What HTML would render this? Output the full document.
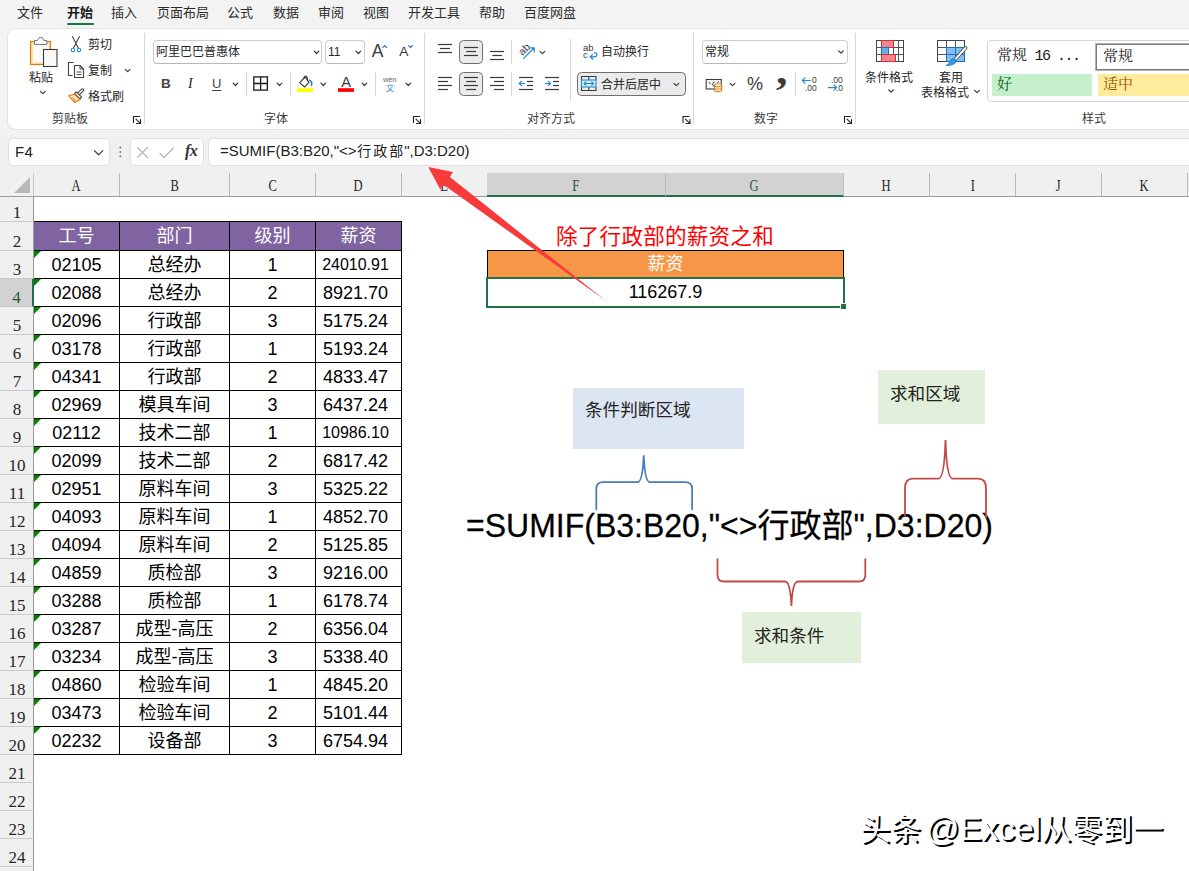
<!DOCTYPE html>
<html lang="zh-CN">
<head>
<meta charset="utf-8">
<title>Excel SUMIF</title>
<style>
*{box-sizing:border-box}
html,body{margin:0;padding:0}
body{width:1189px;height:871px;overflow:hidden;position:relative;background:#f3f3f3;
 font-family:"Liberation Sans","Noto Sans CJK SC",sans-serif;color:#242424}
.abs{position:absolute}
/* ---------- tabs ---------- */
#tabs{position:absolute;left:0;top:0;width:1189px;height:28px}
#tabs span{position:absolute;top:3px;height:20px;line-height:20px;font-size:13px;white-space:nowrap;color:#2b2b2b}
#tabs span.on{font-weight:bold;color:#1a1a1a}
#tabs u{position:absolute;left:67px;top:22.5px;width:27px;height:2.4px;background:#107c41;border-radius:1px}
/* ---------- ribbon ---------- */
#ribbon .t{position:absolute;font-size:12px;line-height:16px;height:16px;white-space:nowrap;color:#262626}
#ribbon .lbl{position:absolute;top:82px;font-size:12px;line-height:16px;height:16px;white-space:nowrap;color:#3b3b3b;transform:translateX(-50%)}
#ribbon .vs{position:absolute;width:1px;background:#d6d6d6}
#ribbon .box{position:absolute;height:24px;border:1px solid #cdcdcd;border-bottom-color:#b8b8b8;border-radius:4px;background:#fff;font-size:12px;line-height:22px;padding-left:2px;color:#262626;white-space:nowrap}
#ribbon .btn{position:absolute;border:1px solid #6e6e6e;border-radius:4.5px;background:#ebebeb}
#ribbon svg{position:absolute;overflow:visible}
.chev{position:absolute;width:7px;height:4px}
/* ---------- formula bar ---------- */
#fbar{position:absolute;left:0;top:130px;width:1189px;height:43px;overflow:hidden;background:linear-gradient(#f3f3f3,#f0f0f0 30%)}
#fbar .fb{position:absolute;top:8px;height:28px;background:#fff;border:1px solid #e0e0e0;border-radius:5px}
#fbar svg{position:absolute;overflow:visible}
/* ---------- grid ---------- */
#grid{position:absolute;left:0;top:173px;width:1189px;height:698px;background:#fff}
#colhdr{position:absolute;left:0;top:0;width:1189px;height:24px;background:#f0f0f0;border-bottom:1px solid #9b9b9b}
#colhdr .corner{position:absolute;left:0;top:0;width:34px;height:23px;border-right:1px solid #c8c8c8}
#colhdr .corner i{position:absolute;right:3px;bottom:3px;width:0;height:0;border-left:16px solid transparent;border-bottom:16px solid #b8b8b8}
.ch{position:absolute;top:0;height:23px;line-height:25px;text-align:center;font-family:"Liberation Serif","Noto Serif CJK SC",serif;font-size:17px;color:#262626;border-right:1px solid #b9b9b9}
.ch.sel{background:#d2d2d2;color:#1e5c38;height:24px;border-bottom:2px solid #217346;border-right-color:#bdbdbd;z-index:1}
#rowhdr{position:absolute;left:0;top:-173px;width:34px;height:871px;z-index:2}
.rh{position:absolute;left:0;width:34px;background:#f0f0f0;border-right:1px solid #9b9b9b;border-bottom:1px solid #c8c8c8;font-family:"Liberation Serif","Noto Serif CJK SC",serif;font-size:17px;color:#262626;text-align:center}
.rh span{position:absolute;left:0;right:-1px;bottom:-4px;line-height:24px}
.rh.sel{background:#d2d2d2;color:#1e5c38;border-right:2px solid #217346}
#tbl{position:absolute;left:33px;top:48px;border-collapse:collapse;table-layout:fixed;width:369px}
#tbl td,#tbl th{border:1px solid #000;height:28px;padding:0;text-align:center;font-size:18px;line-height:26px;font-weight:normal;color:#000;position:relative;white-space:nowrap;overflow:hidden}
#tbl tr.hd th{background:#8064a2;color:#fff;height:29px}
#tbl td.sm{font-size:16px}
#tbl td:nth-child(4){padding-right:6px}
#tbl td.id i{position:absolute;left:0;top:0;width:0;height:0;border-top:7px solid #008000;border-right:7px solid transparent}
/* ---------- sheet objects ---------- */
.redtitle{position:absolute;left:487px;top:50px;width:356px;height:28px;line-height:28px;text-align:center;color:#ff0000;font-size:21.6px;letter-spacing:.2px;white-space:nowrap}
.orange{position:absolute;left:487px;top:77px;width:357px;height:28px;background:#f79646;border:1px solid #000;color:#fff;font-size:18px;line-height:27px;text-align:center}
.selcell{position:absolute;left:486px;top:104px;width:359px;height:31px;border:2px solid #217346;background:#fff;font-size:18px;line-height:27px;text-align:center;color:#000}
.selcell b{position:absolute;right:-3px;bottom:-3px;width:5px;height:5px;background:#217346;border:1px solid #fff;border-right:0;border-bottom:0;box-sizing:content-box}
.note{position:absolute}
.note.blue{background:#dce6f2}
.note.green{background:#e2efda}
.note span{position:absolute;font-size:17.6px;line-height:24px;color:#222;white-space:nowrap}
.bigf{position:absolute;left:466px;top:333px;font-size:32px;line-height:40px;color:#000;white-space:nowrap;transform:scaleY(1.045);transform-origin:0 31px;-webkit-text-stroke:.25px #000}
svg.ov{position:absolute;left:0;top:0;pointer-events:none;overflow:visible;z-index:3}
.wm{position:absolute;left:860px;top:636px;word-spacing:-4px;font-size:30.5px;line-height:40px;color:#fff;text-shadow:2px 2px 0 #000;white-space:nowrap}
.wm span{font-size:33.4px}
/* ribbon container uses page coordinates */
#ribbon{position:absolute;left:0;top:0;width:1189px;height:130px;overflow:hidden}
#ribbon .panel{position:absolute;left:8px;top:29px;width:1200px;height:100px;background:#fff;border-radius:8px;box-shadow:0 0 0 1px #e3e3e3,0 1px 2px rgba(0,0,0,.12)}
#ribbon .lbl{top:110px}
#ribbon .gal{position:absolute;left:987px;top:40px;width:230px;height:62px;border:1px solid #d6d6d6;border-radius:4px;background:#fff}
#ribbon .gal div{position:absolute;font-family:"Liberation Mono","Noto Serif CJK SC",monospace;font-size:15px;line-height:22px;white-space:nowrap;color:#1a1a1a}
#ribbon .g1{left:9px;top:5px;letter-spacing:-1.5px}
#ribbon .g2{left:107px;top:2px;width:130px;height:28px;border:2px solid #b5b5b5;outline:1px solid #7a7a7a;outline-offset:-2px;padding-left:6px;line-height:26px !important;background:#fff}
#ribbon .g3{left:4px;top:33px;width:100px;height:22px;background:#c6efce;color:#006100 !important;padding-left:5px;line-height:24px !important}
#ribbon .g4{left:110px;top:33px;width:130px;height:22px;background:#ffeb9c;color:#9c5700 !important;padding-left:5px;line-height:24px !important}
#fbar .nm{position:absolute;left:15px;top:13px;font-size:15px;letter-spacing:.4px;line-height:18px;color:#222}
#fbar .ftxt span{font-size:14px;letter-spacing:2px;margin-left:.5px;margin-right:-1px}
#fbar .ftxt{position:absolute;left:220px;top:11px;font-size:15px;line-height:20px;color:#222;white-space:nowrap}
#fbar .fx{position:absolute;left:185px;top:11px;font-family:"Liberation Serif",serif;font-style:italic;font-weight:bold;font-size:16px;line-height:20px;color:#333;letter-spacing:-.5px}
#ribbon .t.dg{font-size:8.5px;line-height:10px;height:10px;color:#3a3a3a;margin-top:0}
#ribbon .t.ab{font-size:9.5px;line-height:10px;height:10px;color:#3a3a3a;margin-top:0}
#ribbon .t,#ribbon .lbl{margin-top:1px}
#ribbon .g1 span{letter-spacing:0}
.ch span{display:inline-block;transform:scaleX(.74)}
#ribbon .t.cm{font-family:'Liberation Serif',serif;font-weight:bold;font-size:41px;line-height:20px;height:20px;color:#3a3a3a;margin-top:0;transform:scaleX(1.12);transform-origin:0 0}

</style>
</head>
<body>
<div id="tabs">
<span style="left:17px">文件</span><span class="on" style="left:67px">开始</span><span style="left:111px">插入</span><span style="left:157px">页面布局</span><span style="left:227px">公式</span><span style="left:273px">数据</span><span style="left:318px">审阅</span><span style="left:363px">视图</span><span style="left:408px">开发工具</span><span style="left:479px">帮助</span><span style="left:524px">百度网盘</span>
<u></u>
</div>
<div id="ribbon">
<div class="panel"></div>
<!-- group separators -->
<div class="vs" style="left:144px;top:33px;height:91px"></div>
<div class="vs" style="left:424px;top:33px;height:91px"></div>
<div class="vs" style="left:693px;top:33px;height:91px"></div>
<div class="vs" style="left:855px;top:33px;height:91px"></div>
<!-- inner separators -->
<div class="vs" style="left:246px;top:72px;height:24px"></div>
<div class="vs" style="left:290px;top:72px;height:24px"></div>
<div class="vs" style="left:375px;top:72px;height:24px"></div>
<div class="vs" style="left:511px;top:40px;height:24px"></div>
<div class="vs" style="left:511px;top:72px;height:24px"></div>
<div class="vs" style="left:570px;top:39px;height:62px"></div>
<div class="vs" style="left:795px;top:72px;height:24px"></div>
<!-- group labels -->
<div class="lbl" style="left:70px">剪贴板</div>
<div class="lbl" style="left:276px">字体</div>
<div class="lbl" style="left:551px">对齐方式</div>
<div class="lbl" style="left:766px">数字</div>
<div class="lbl" style="left:1094px">样式</div>
<!-- clipboard text -->
<div class="t" style="left:29px;top:69px">粘贴</div>
<div class="t" style="left:88px;top:36px">剪切</div>
<div class="t" style="left:88px;top:62px">复制</div>
<div class="t" style="left:88px;top:88px">格式刷</div>
<!-- font group -->
<div class="box" style="left:153px;top:40px;width:169px">阿里巴巴普惠体</div>
<div class="box" style="left:325px;top:40px;width:40px">11</div>
<div class="t ic" style="left:161px;top:75px;font-weight:bold;font-size:13.5px;color:#444">B</div>
<div class="t ic" style="left:188px;top:75px;font-style:italic;font-size:14px;font-family:'Liberation Serif',serif">I</div>
<div class="t ic" style="left:212px;top:75px;font-size:13px;text-decoration:underline;text-underline-offset:1.5px;color:#444">U</div>
<div class="t" style="left:371.7px;top:40px;font-size:17.5px;line-height:20px;height:20px;color:#3a3a3a">A</div>
<div class="t" style="left:399.3px;top:42.2px;font-size:13.7px;line-height:18px;height:18px;color:#3a3a3a">A</div>
<div class="t" style="left:341.3px;top:71.8px;font-size:14.7px;line-height:18px;height:18px;color:#3a3a3a">A</div>
<div class="t" style="left:383px;top:75px;font-size:7.5px;line-height:8px;height:8px;color:#666;letter-spacing:-.2px">wén</div>
<div class="t" style="left:385.8px;top:81.5px;font-size:8.5px;line-height:10px;height:10px;color:#2b88d8">文</div>
<!-- alignment group -->
<div class="btn" style="left:459px;top:40px;width:24px;height:24px"></div>
<div class="btn" style="left:459px;top:72px;width:24px;height:24px"></div>
<div class="t" style="left:601px;top:43px">自动换行</div>
<div class="btn" style="left:577px;top:72px;width:109px;height:24px"></div>
<div class="t" style="left:601px;top:76px">合并后居中</div>
<!-- number group -->
<div class="box" style="left:702px;top:40px;width:146px">常规</div>
<div class="t" style="left:747px;top:72px;font-size:18px;line-height:22px;height:22px;color:#3a3a3a;transform:scaleY(1.06)">%</div>
<div class="t cm" style="left:775.5px;top:60px">,</div>
<div class="t dg" style="left:812px;top:75px">0</div><div class="t dg" style="left:805px;top:83px">.00</div>
<div class="t dg" style="left:831px;top:75px">.00</div><div class="t dg" style="left:836px;top:83px">.0</div>
<div class="t ab" style="left:583px;top:43px">ab</div><div class="t ab" style="left:583px;top:50px">c</div>
<div class="t ab" style="left:518px;top:44px;font-size:10.5px;transform:rotate(-45deg)">ab</div>
<!-- styles group -->
<div class="t" style="left:889px;top:69px;transform:translateX(-50%)">条件格式</div>
<div class="t" style="left:951px;top:69px;transform:translateX(-50%)">套用</div>
<div class="t" style="left:921px;top:84px">表格格式</div>
<div class="gal">
<div class="g1"><span>常规</span> 16 ...</div>
<div class="g2">常规</div>
<div class="g3">好</div>
<div class="g4">适中</div>
</div>
<svg width="1189" height="130" viewBox="0 0 1189 130" style="left:0;top:0">
<rect x="30.5" y="41.5" width="20" height="23" fill="#fbe3a0" stroke="#e07a10" stroke-width="1.2"/>
<rect x="33" y="44" width="16" height="18.5" fill="#fafafa"/>
<path d="M34.5 44.5 V40.5 H37.6 Q38 37.3 40.7 37.3 Q43.4 37.3 43.8 40.5 H46.9 V44.5 Z" fill="#fafafa" stroke="#7a7a7a" stroke-width="1"/>
<rect x="43.5" y="49.5" width="13.5" height="17" fill="#fafafa" stroke="#3b3b3b" stroke-width="1.1"/>
<path d="M40.4 91.3 L42.8 93.7 L45.199999999999996 91.3" fill="none" stroke="#3a3a3a" stroke-width="1.2" stroke-linecap="round" stroke-linejoin="round"/>
<path d="M72.4 36.6 L78.4 48.3 M79.4 36.6 L73.4 48.3" stroke="#444" stroke-width="1.1" fill="none" stroke-linecap="round"/>
<circle cx="72.9" cy="50" r="1.7" fill="#fff" stroke="#1e8ad6" stroke-width="1.1"/><circle cx="78.9" cy="50" r="1.7" fill="#fff" stroke="#1e8ad6" stroke-width="1.1"/>
<path d="M73.5 62.5 H68.5 V75.5 H72.5" fill="none" stroke="#444" stroke-width="1.1"/>
<path d="M74.5 65.5 H80 L83.5 69 V77.5 H74.5 Z" fill="#fff" stroke="#444" stroke-width="1.1" stroke-linejoin="round"/>
<path d="M80 65.5 V69 H83.5 M76.5 72 H81.5 M76.5 74.5 H81.5" fill="none" stroke="#444" stroke-width="1"/>
<path d="M125.19999999999999 69.3 L127.6 71.7 L130.0 69.3" fill="none" stroke="#3a3a3a" stroke-width="1.2" stroke-linecap="round" stroke-linejoin="round"/>
<path d="M77.5 93.2 L81.6 89.2 Q82.8 88.3 83.5 89.3 Q84.1 90.3 83 91.2 L79.2 94.8" fill="#fff" stroke="#444" stroke-width="1.1" stroke-linejoin="round"/>
<path d="M74.6 93.4 L76.4 91.8 L81.6 97.2 L80 98.8 Z" fill="#fff" stroke="#444" stroke-width="1.1" stroke-linejoin="round"/>
<path d="M74.3 94 L80 99.6 L74.8 102.6 L68.8 95.8 Z" fill="#fde3c0" stroke="#e07a10" stroke-width="1.2" stroke-linejoin="round"/>
<path d="M72.5 97.5 L75.5 101.2" stroke="#e07a10" stroke-width="1" fill="none"/>
<path d="M139.5 116.5 H133.5 V122.5 M136 119.2 L140.3 123.3 M140.5 119.5 V123.5 H136.5" fill="none" stroke="#222" stroke-width="1.1" stroke-linecap="round"/>
<path d="M314.1 51.099999999999994 L316.5 53.5 L318.9 51.099999999999994" fill="none" stroke="#3a3a3a" stroke-width="1.2" stroke-linecap="round" stroke-linejoin="round"/>
<path d="M355.90000000000003 51.099999999999994 L358.3 53.5 L360.7 51.099999999999994" fill="none" stroke="#3a3a3a" stroke-width="1.2" stroke-linecap="round" stroke-linejoin="round"/>
<path d="M382.8 47.4 L384.7 45.6 L386.6 47.4" fill="none" stroke="#1e6fc0" stroke-width="1.2" stroke-linecap="round" stroke-linejoin="round"/>
<path d="M408.7 45.6 L410.6 47.4 L412.5 45.6" fill="none" stroke="#1e6fc0" stroke-width="1.2" stroke-linecap="round" stroke-linejoin="round"/>
<path d="M233.1 83.1 L235.5 85.5 L237.9 83.1" fill="none" stroke="#3a3a3a" stroke-width="1.2" stroke-linecap="round" stroke-linejoin="round"/>
<rect x="253.8" y="76.9" width="13.6" height="13.2" fill="none" stroke="#1a1a1a" stroke-width="1.3"/><path d="M260.6 76.9 V90.1 M253.8 83.5 H267.4" stroke="#1a1a1a" stroke-width="1.3" fill="none"/>
<path d="M277.1 83.1 L279.5 85.5 L281.9 83.1" fill="none" stroke="#3a3a3a" stroke-width="1.2" stroke-linecap="round" stroke-linejoin="round"/>
<path d="M305.2 77 L299.6 82.6 L304.6 87 L309 82.4 Z" fill="#fff" stroke="#3a3a3a" stroke-width="1.1" stroke-linejoin="round"/>
<path d="M303.8 78.4 Q304.4 75.4 306.2 76.2 Q307.8 77 307.4 81" fill="none" stroke="#3a3a3a" stroke-width="1.1" stroke-linecap="round"/>
<path d="M309.6 80.2 Q312.6 82 311.5 85.2" fill="none" stroke="#1e6fc0" stroke-width="1.4" stroke-linecap="round"/>
<rect x="297" y="88.2" width="16" height="3.7" fill="#ffff00"/>
<path d="M320.90000000000003 83.1 L323.3 85.5 L325.7 83.1" fill="none" stroke="#3a3a3a" stroke-width="1.2" stroke-linecap="round" stroke-linejoin="round"/>
<rect x="338" y="88.2" width="16" height="3.7" fill="#ff0000"/>
<path d="M362.0 83.1 L364.4 85.5 L366.79999999999995 83.1" fill="none" stroke="#3a3a3a" stroke-width="1.2" stroke-linecap="round" stroke-linejoin="round"/>
<path d="M405.90000000000003 83.1 L408.3 85.5 L410.7 83.1" fill="none" stroke="#3a3a3a" stroke-width="1.2" stroke-linecap="round" stroke-linejoin="round"/>
<path d="M419.5 116.5 H413.5 V122.5 M416 119.2 L420.3 123.3 M420.5 119.5 V123.5 H416.5" fill="none" stroke="#222" stroke-width="1.1" stroke-linecap="round"/>
<path d="M438 44.5 H452" stroke="#3a3a3a" stroke-width="1.2" fill="none"/>
<path d="M438 52.5 H452" stroke="#3a3a3a" stroke-width="1.2" fill="none"/>
<path d="M440 48.5 H450" stroke="#3a3a3a" stroke-width="1.2" fill="none"/>
<path d="M464 47.5 H478" stroke="#3a3a3a" stroke-width="1.2" fill="none"/>
<path d="M464 55.5 H478" stroke="#3a3a3a" stroke-width="1.2" fill="none"/>
<path d="M466.3 51.5 H476" stroke="#3a3a3a" stroke-width="1.2" fill="none"/>
<path d="M490 51.5 H504" stroke="#3a3a3a" stroke-width="1.2" fill="none"/>
<path d="M490 59.5 H504" stroke="#3a3a3a" stroke-width="1.2" fill="none"/>
<path d="M492.4 55.5 H502" stroke="#3a3a3a" stroke-width="1.2" fill="none"/>
<path d="M523.6 58.4 L534 48 M530 47.8 H534.2 V52" fill="none" stroke="#1e8ad6" stroke-width="1.2" stroke-linecap="round" stroke-linejoin="round"/>
<path d="M540.0 51.3 L542.4 53.7 L544.8 51.3" fill="none" stroke="#3a3a3a" stroke-width="1.2" stroke-linecap="round" stroke-linejoin="round"/>
<path d="M438 77.5 H452" stroke="#3a3a3a" stroke-width="1.2" fill="none"/>
<path d="M438 85.5 H452" stroke="#3a3a3a" stroke-width="1.2" fill="none"/>
<path d="M438 81.5 H448" stroke="#3a3a3a" stroke-width="1.2" fill="none"/>
<path d="M438 89.5 H448" stroke="#3a3a3a" stroke-width="1.2" fill="none"/>
<path d="M464 77.5 H478" stroke="#3a3a3a" stroke-width="1.2" fill="none"/>
<path d="M464 85.5 H478" stroke="#3a3a3a" stroke-width="1.2" fill="none"/>
<path d="M466.3 81.5 H476" stroke="#3a3a3a" stroke-width="1.2" fill="none"/>
<path d="M466.3 89.5 H476" stroke="#3a3a3a" stroke-width="1.2" fill="none"/>
<path d="M490 77.5 H504" stroke="#3a3a3a" stroke-width="1.2" fill="none"/>
<path d="M490 85.5 H504" stroke="#3a3a3a" stroke-width="1.2" fill="none"/>
<path d="M494 81.5 H504" stroke="#3a3a3a" stroke-width="1.2" fill="none"/>
<path d="M494 89.5 H504" stroke="#3a3a3a" stroke-width="1.2" fill="none"/>
<path d="M519 77.5 H533" stroke="#3a3a3a" stroke-width="1.2" fill="none"/>
<path d="M519 89.5 H533" stroke="#3a3a3a" stroke-width="1.2" fill="none"/>
<path d="M527 81.5 H533" stroke="#3a3a3a" stroke-width="1.2" fill="none"/>
<path d="M527 85.5 H533" stroke="#3a3a3a" stroke-width="1.2" fill="none"/>
<path d="M524.6 83.5 H519.2 M521.4 81.3 L519.2 83.5 L521.4 85.7" fill="none" stroke="#1e8ad6" stroke-width="1.2" stroke-linecap="round" stroke-linejoin="round"/>
<path d="M545 77.5 H559" stroke="#3a3a3a" stroke-width="1.2" fill="none"/>
<path d="M545 89.5 H559" stroke="#3a3a3a" stroke-width="1.2" fill="none"/>
<path d="M553 81.5 H559" stroke="#3a3a3a" stroke-width="1.2" fill="none"/>
<path d="M553 85.5 H559" stroke="#3a3a3a" stroke-width="1.2" fill="none"/>
<path d="M545.2 83.5 H550.5 M548.3 81.3 L550.5 83.5 L548.3 85.7" fill="none" stroke="#1e8ad6" stroke-width="1.2" stroke-linecap="round" stroke-linejoin="round"/>
<path d="M594.6 52.6 Q597.6 53.4 596.8 55.6 Q596 57 590.4 56.8 M592.6 54.6 L590.2 56.8 L592.6 59" fill="none" stroke="#1e8ad6" stroke-width="1.2" stroke-linecap="round" stroke-linejoin="round"/>
<path d="M581.5 80 V76.5 H596 V80 M588.8 76.5 V80 M581.5 87 V90.5 H596 V87 M588.8 87 V90.5" fill="none" stroke="#3a3a3a" stroke-width="1.1"/>
<rect x="581.5" y="80" width="14.5" height="7" fill="#d9ecfa" stroke="#1e8ad6" stroke-width="1.1"/>
<path d="M584 83.5 H593.5 M585.8 81.8 L584 83.5 L585.8 85.2 M591.7 81.8 L593.5 83.5 L591.7 85.2" fill="none" stroke="#1e8ad6" stroke-width="1.1" stroke-linecap="round" stroke-linejoin="round"/>
<path d="M673.9 83.3 L676.3 85.7 L678.6999999999999 83.3" fill="none" stroke="#3a3a3a" stroke-width="1.2" stroke-linecap="round" stroke-linejoin="round"/>
<path d="M689.0 116.5 H683.0 V122.5 M685.5 119.2 L689.8 123.3 M690.0 119.5 V123.5 H686.0" fill="none" stroke="#222" stroke-width="1.1" stroke-linecap="round"/>
<path d="M838.6 50.8 L841 53.2 L843.4 50.8" fill="none" stroke="#3a3a3a" stroke-width="1.2" stroke-linecap="round" stroke-linejoin="round"/>
<rect x="706.2" y="79.5" width="15" height="9.5" fill="#fff" stroke="#3a3a3a" stroke-width="1.1"/>
<path d="M709 81.8 Q709 83.6 710.8 84 M719 81.6 Q717.4 81.8 717.2 83" fill="none" stroke="#3a3a3a" stroke-width=".9"/>
<path d="M714.8 82 Q712.6 82 712.6 84.2 Q712.6 86.4 714.6 86.4" fill="none" stroke="#3a3a3a" stroke-width=".9"/>
<path d="M714.5 85.2 V90 Q714.5 91.6 718.1 91.6 Q721.7 91.6 721.7 90 V85.2" fill="#fff" stroke="#e07a10" stroke-width="1.1"/>
<ellipse cx="718.1" cy="85.2" rx="3.6" ry="1.5" fill="#fff" stroke="#e07a10" stroke-width="1.1"/>
<path d="M714.5 87.7 Q714.7 89.2 718.1 89.2 Q721.5 89.2 721.7 87.7" fill="none" stroke="#e07a10" stroke-width="1"/>
<path d="M730.1 83.3 L732.5 85.7 L734.9 83.3" fill="none" stroke="#3a3a3a" stroke-width="1.2" stroke-linecap="round" stroke-linejoin="round"/>
<path d="M810.4 80.5 H802.4 M805 77.9 L802.4 80.5 L805 83.1" fill="none" stroke="#1e8ad6" stroke-width="1.2" stroke-linecap="round" stroke-linejoin="round"/>
<path d="M828.4 87.6 H836.6 M834 85 L836.6 87.6 L834 90.2" fill="none" stroke="#1e8ad6" stroke-width="1.2" stroke-linecap="round" stroke-linejoin="round"/>
<path d="M850.5 116.5 H844.5 V122.5 M847 119.2 L851.3 123.3 M851.5 119.5 V123.5 H847.5" fill="none" stroke="#222" stroke-width="1.1" stroke-linecap="round"/>
<rect x="876.5" y="40.5" width="27" height="21" fill="#fff" stroke="#444" stroke-width="1"/>
<path d="M876.5 47.5 H903.5 M876.5 54.5 H903.5 M881.5 40.5 V61.5 M893.5 40.5 V61.5 M898.5 40.5 V61.5" stroke="#555" stroke-width="1" fill="none"/>
<rect x="881.5" y="40.5" width="12" height="7" fill="#f4858e" stroke="#d13438" stroke-width="1"/>
<rect x="881.5" y="47.5" width="7" height="7" fill="#69afe5" stroke="#1e6fc0" stroke-width="1"/>
<rect x="881.5" y="54.5" width="14" height="7" fill="#f4858e" stroke="#d13438" stroke-width="1"/>
<path d="M888.6 89.8 L891 92.2 L893.4 89.8" fill="none" stroke="#3a3a3a" stroke-width="1.2" stroke-linecap="round" stroke-linejoin="round"/>
<rect x="937.5" y="40.5" width="27" height="21" fill="#fff" stroke="#444" stroke-width="1"/>
<path d="M937.5 47.5 H964.5 M937.5 54.5 H964.5 M946.5 40.5 V61.5 M955.5 40.5 V61.5" stroke="#555" stroke-width="1" fill="none"/>
<rect x="946.5" y="47.5" width="18" height="14" fill="#83beec" stroke="#1e6fc0" stroke-width="1"/>
<path d="M946.5 54.5 H964.5 M955.5 47.5 V61.5" stroke="#1e6fc0" stroke-width="1" fill="none"/>
<path d="M953.6 59.2 L964.2 47.2 Q965.8 45.9 966.7 46.9 Q967.5 47.9 966.2 49.4 L955.6 61" fill="#fff" stroke="#444" stroke-width="1" stroke-linejoin="round"/>
<path d="M952.4 58.6 Q955.6 58.2 956.2 61 Q955.6 65.4 945.8 65.6 Q950 63.4 950 61.2 Q950.2 59.2 952.4 58.6 Z" fill="#3a96dd" stroke="#2b7cc0" stroke-width=".8"/>
<path d="M974.6 90.3 L977 92.7 L979.4 90.3" fill="none" stroke="#3a3a3a" stroke-width="1.2" stroke-linecap="round" stroke-linejoin="round"/>
</svg>

</div>
<div id="fbar">
<div class="fb" style="left:8px;width:102px"></div>
<div class="fb" style="left:130px;width:74px"></div>
<div class="fb" style="left:208px;width:1000px"></div>
<div class="nm">F4</div>
<div class="ftxt">=SUMIF(B3:B20,"&lt;&gt;<span>行政部</span>",D3:D20)</div>
<div class="fx">fx</div>
<svg width="220" height="43" viewBox="0 130 220 43" style="left:0;top:0">
<path d="M94.4 150.6 L98.6 154.8 L102.8 150.6" fill="none" stroke="#444" stroke-width="1.3" stroke-linecap="round" stroke-linejoin="round"/>
<circle cx="120.4" cy="147.6" r="1" fill="#7a7a7a"/><circle cx="120.4" cy="152" r="1" fill="#7a7a7a"/><circle cx="120.4" cy="156.3" r="1" fill="#7a7a7a"/>
<path d="M137.5 147.5 L147.5 157.5 M147.5 147.5 L137.5 157.5" fill="none" stroke="#b4b4b4" stroke-width="1.1" stroke-linecap="round"/>
<path d="M160 153.5 L164 157.5 L173.5 148" fill="none" stroke="#b4b4b4" stroke-width="1.1" stroke-linecap="round" stroke-linejoin="round"/>
</svg>
</div>
<div id="grid">
<div id="colhdr">
<div class="corner"><i></i></div>
<div class="ch" style="left:34px;width:86px"><span>A</span></div>
<div class="ch" style="left:120px;width:110px"><span>B</span></div>
<div class="ch" style="left:230px;width:86px"><span>C</span></div>
<div class="ch" style="left:316px;width:86px"><span>D</span></div>
<div class="ch" style="left:402px;width:86px"><span>E</span></div>
<div class="ch sel" style="left:487px;width:179px"><span>F</span></div>
<div class="ch sel" style="left:666px;width:178px"><span>G</span></div>
<div class="ch" style="left:844px;width:86px"><span>H</span></div>
<div class="ch" style="left:930px;width:86px"><span>I</span></div>
<div class="ch" style="left:1016px;width:86px"><span>J</span></div>
<div class="ch" style="left:1102px;width:86px"><span>K</span></div>
<div class="ch" style="left:1188px;width:86px"><span>L</span></div>
</div>
<div id="rowhdr">
<div class="rh" style="top:197px;height:25px"><span>1</span></div>
<div class="rh" style="top:222px;height:29px"><span>2</span></div>
<div class="rh" style="top:251px;height:28px"><span>3</span></div>
<div class="rh sel" style="top:279px;height:28px"><span>4</span></div>
<div class="rh" style="top:307px;height:28px"><span>5</span></div>
<div class="rh" style="top:335px;height:28px"><span>6</span></div>
<div class="rh" style="top:363px;height:28px"><span>7</span></div>
<div class="rh" style="top:391px;height:28px"><span>8</span></div>
<div class="rh" style="top:419px;height:28px"><span>9</span></div>
<div class="rh" style="top:447px;height:28px"><span>10</span></div>
<div class="rh" style="top:475px;height:28px"><span>11</span></div>
<div class="rh" style="top:503px;height:28px"><span>12</span></div>
<div class="rh" style="top:531px;height:28px"><span>13</span></div>
<div class="rh" style="top:559px;height:28px"><span>14</span></div>
<div class="rh" style="top:587px;height:28px"><span>15</span></div>
<div class="rh" style="top:615px;height:28px"><span>16</span></div>
<div class="rh" style="top:643px;height:28px"><span>17</span></div>
<div class="rh" style="top:671px;height:28px"><span>18</span></div>
<div class="rh" style="top:699px;height:28px"><span>19</span></div>
<div class="rh" style="top:727px;height:28px"><span>20</span></div>
<div class="rh" style="top:755px;height:28px"><span>21</span></div>
<div class="rh" style="top:783px;height:28px"><span>22</span></div>
<div class="rh" style="top:811px;height:28px"><span>23</span></div>
<div class="rh" style="top:839px;height:28px"><span>24</span></div>
<div class="rh" style="top:867px;height:28px"><span>25</span></div>
</div>
<table id="tbl">
<colgroup><col style="width:86px"><col style="width:110px"><col style="width:86px"><col style="width:86px"></colgroup>
<tr class="hd"><th>工号</th><th>部门</th><th>级别</th><th>薪资</th></tr>
<tr><td class="id"><i></i>02105</td><td>总经办</td><td>1</td><td class="sm">24010.91</td></tr>
<tr><td class="id"><i></i>02088</td><td>总经办</td><td>2</td><td>8921.70</td></tr>
<tr><td class="id"><i></i>02096</td><td>行政部</td><td>3</td><td>5175.24</td></tr>
<tr><td class="id"><i></i>03178</td><td>行政部</td><td>1</td><td>5193.24</td></tr>
<tr><td class="id"><i></i>04341</td><td>行政部</td><td>2</td><td>4833.47</td></tr>
<tr><td class="id"><i></i>02969</td><td>模具车间</td><td>3</td><td>6437.24</td></tr>
<tr><td class="id"><i></i>02112</td><td>技术二部</td><td>1</td><td class="sm">10986.10</td></tr>
<tr><td class="id"><i></i>02099</td><td>技术二部</td><td>2</td><td>6817.42</td></tr>
<tr><td class="id"><i></i>02951</td><td>原料车间</td><td>3</td><td>5325.22</td></tr>
<tr><td class="id"><i></i>04093</td><td>原料车间</td><td>1</td><td>4852.70</td></tr>
<tr><td class="id"><i></i>04094</td><td>原料车间</td><td>2</td><td>5125.85</td></tr>
<tr><td class="id"><i></i>04859</td><td>质检部</td><td>3</td><td>9216.00</td></tr>
<tr><td class="id"><i></i>03288</td><td>质检部</td><td>1</td><td>6178.74</td></tr>
<tr><td class="id"><i></i>03287</td><td>成型-高压</td><td>2</td><td>6356.04</td></tr>
<tr><td class="id"><i></i>03234</td><td>成型-高压</td><td>3</td><td>5338.40</td></tr>
<tr><td class="id"><i></i>04860</td><td>检验车间</td><td>1</td><td>4845.20</td></tr>
<tr><td class="id"><i></i>03473</td><td>检验车间</td><td>2</td><td>5101.44</td></tr>
<tr><td class="id"><i></i>02232</td><td>设备部</td><td>3</td><td>6754.94</td></tr>
</table>
<!-- cells F2:G4 -->
<div class="redtitle">除了行政部的薪资之和</div>
<div class="orange">薪资</div>
<div class="selcell">116267.9<b></b></div>
<!-- callouts -->
<div class="note blue" style="left:573px;top:215px;width:171px;height:61px"><span style="left:12px;top:10px">条件判断区域</span></div>
<div class="note green" style="left:878px;top:197px;width:107px;height:54px"><span style="left:12px;top:12px">求和区域</span></div>
<div class="note green" style="left:742px;top:439px;width:119px;height:51px"><span style="left:12px;top:12px">求和条件</span></div>
<div class="bigf">=SUMIF(B3:B20,"&lt;&gt;行政部",D3:D20)</div>
<svg class="ov" width="1189" height="698" viewBox="0 173 1189 698">
<path d="M596.3 510 V489 Q596.3 482.2 603 482.2 H637.5 Q642.6 482.2 643.7 455.2 Q644.8 482.2 650 482.2 H685.4 Q692.1 482.2 692.1 489 V510" fill="none" stroke="#4a7ebb" stroke-width="1.8"/>
<path d="M905 516 V488 Q905 478.6 913 478.6 H938.5 Q944.3 478.6 945.5 440 Q946.7 478.6 952.5 478.6 H978 Q986 478.6 986 488 V518" fill="none" stroke="#be4b48" stroke-width="1.8"/>
<path d="M717.5 558.5 V575 Q717.5 581.5 724 581.5 H785 Q790.4 581.5 791.4 606 Q792.4 581.5 798 581.5 H858.8 Q865.3 581.5 865.3 575 V558.5" fill="none" stroke="#be4b48" stroke-width="1.8"/>
<polygon points="428.3,166.9 452.9,172 449.9,177 605.5,300.6 444,185 440.3,189.6" fill="#f73a3a"/>
</svg>
<div class="wm">头条 <span>@Excel</span>从零到一</div>
</div>
</body>
</html>
